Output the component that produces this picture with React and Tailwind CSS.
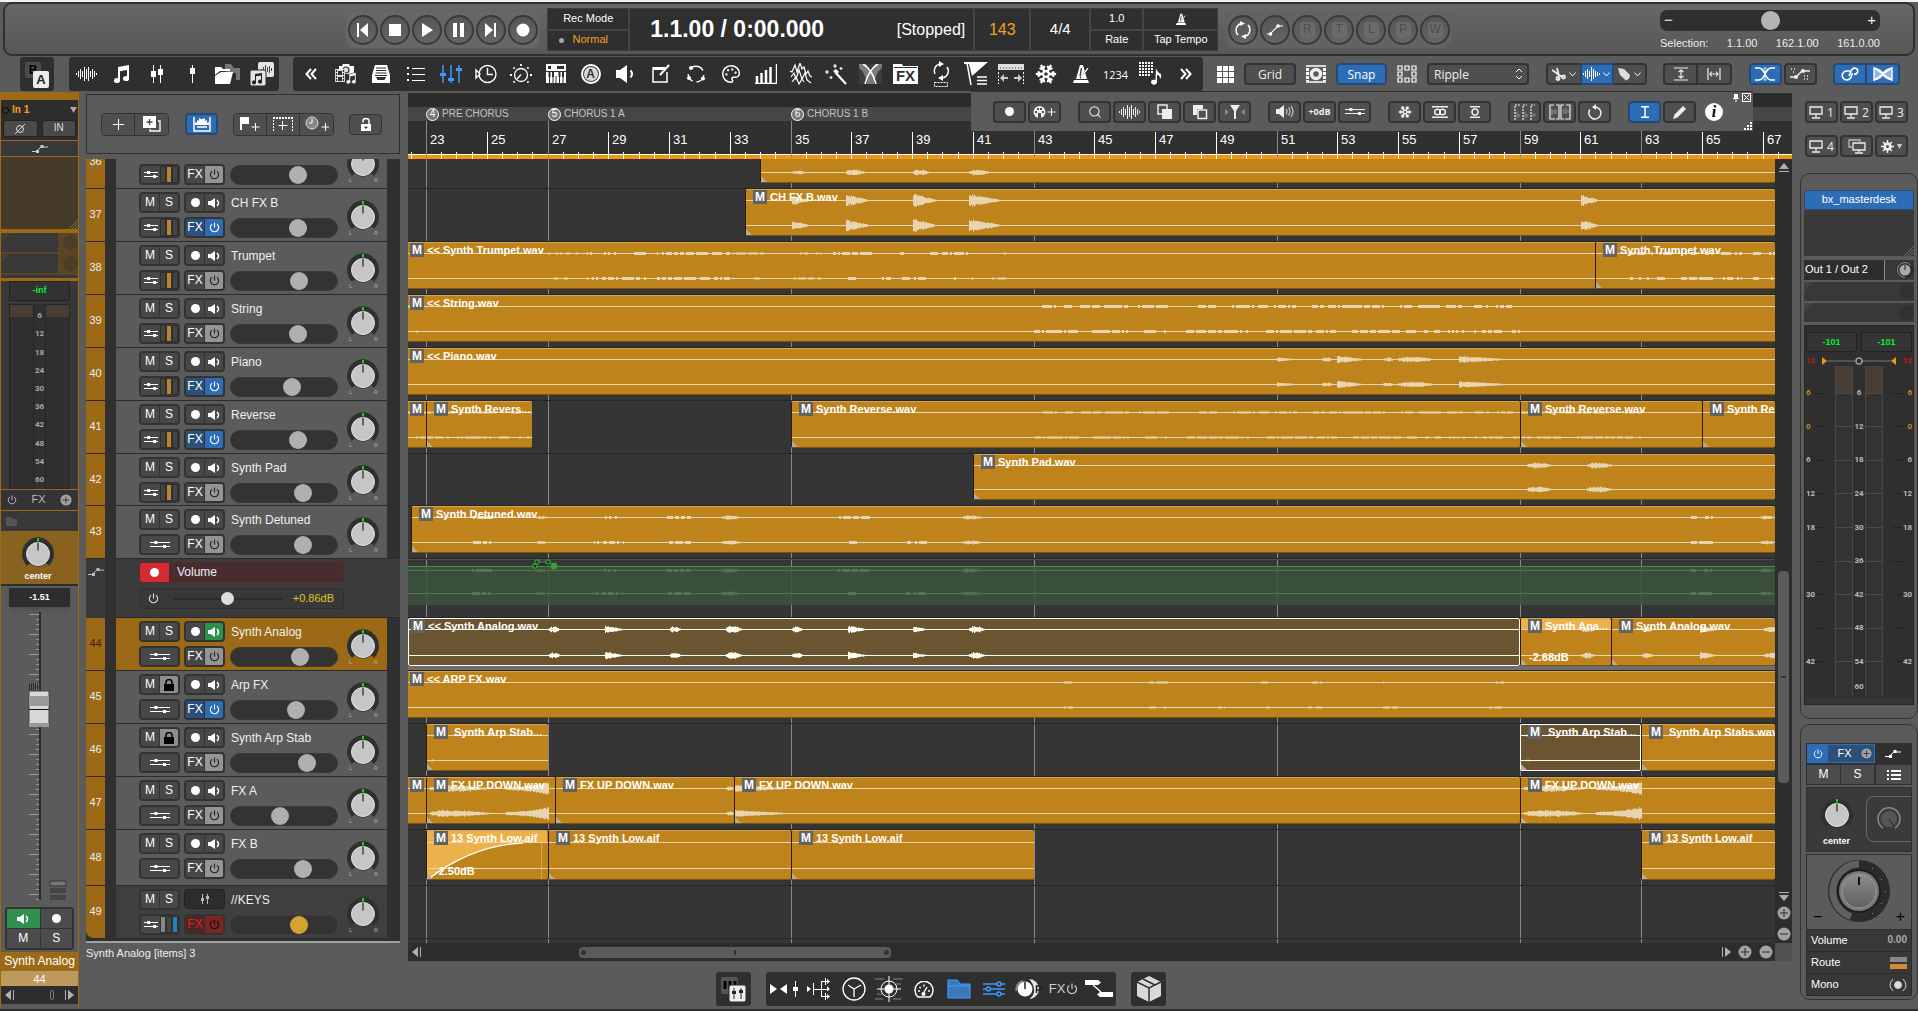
import React from "react";
import { Palette, Snowflake, Search } from "lucide-react";

/* ---------- icon helpers ---------- */
const S = ({ w = 24, h = 24, sw = 1.5, children, ...p }) => (
  <svg width={w} height={h} viewBox={`0 0 ${w} ${h}`} fill="none" stroke="currentColor" strokeWidth={sw} aria-hidden="true" {...p}>
    {children}
  </svg>
);
const F = { fill: "currentColor", stroke: "none" };

const barsPath = (xs, mid) => xs.map(([x, a]) => `M${x} ${mid - a}V${mid + a}`).join("");
const WAVE = [[1, 1], [3, 3], [5, 5], [7, 3], [9, 7], [11, 5], [13, 7], [15, 3], [17, 5], [19, 3], [21, 1]];

const Wave = () => <S w={22} h={16} sw={1}><path d={barsPath(WAVE.map(([x, a]) => [x - 0.5, a]), 8)} /></S>;
const Notes = () => (
  <S w={16} h={18}><path {...F} d="M4 2l11-2v13.5a3 2.5 0 1 1-2-2.3V5L6 6.3v9.2a3 2.5 0 1 1-2-2.3z" /></S>
);
const Faders2 = () => (
  <S w={14} h={18} sw={1}><path d="M3.5 0v18M10.5 0v18" /><path {...F} d="M1 6h5v6H1zM8 4h5v6H8z" /></S>
);
const Fader1 = () => <S w={6} h={18} sw={1}><path d="M3.5 0v18" /><path {...F} d="M1 3h5v6H1z" /></S>;
const Folders = () => (
  <S w={26} h={20}>
    <path fill="#777" stroke="none" d="M11 0h6l3 4h6v12h-4V9h-6l-5-2z" />
    <path {...F} d="M1 3h6l2 2h7v2H6l-5 4zM1 12l6-4h12L16 20H1z" />
  </S>
);
const PagesWave = () => (
  <S w={26} h={26} sw={1}>
    <rect x="9" y="1" width="16" height="15" rx="2" fill="#e4e4e4" stroke="none" />
    <path stroke="#444" d="M12.5 8v1M14.5 6v5M16.5 4v9M18.5 6v5M20.5 5v7M22.5 7v3" />
    <rect x="1" y="9" width="16" height="16" rx="2" fill="#e4e4e4" stroke="#2f2f2f" />
    <path fill="#222" stroke="none" d="M6 13l7-1v8.500a2 2 0 1 1-1-1.600v-4.400l-5 .8v6a2 2 0 1 1-1-1.600z" />
  </S>
);
const DblLeft = () => <S w={12} h={12} sw={2}><path d="M6 1L1.500 6 6 11M11 1L6.500 6 11 11" /></S>;
const DblRight = () => <S w={12} h={12} sw={2}><path d="M1 1l4.500 5L1 11M6 1l4.500 5L6 11" /></S>;
const Media = () => (
  <S w={24} h={20} sw={1.2}>
    <path {...F} d="M5 2h3l1-2h6l1 2h4v8H5z" /><circle cx="12" cy="6" r="3" stroke="#2f2f2f" fill="#ddd" />
    <rect x="1" y="5" width="10" height="13" fill="#ddd" stroke="none" />
    <path stroke="#2f2f2f" strokeDasharray="2 1" d="M2.500 6v12M9.500 6v12" /><path fill="#2f2f2f" stroke="none" d="M4 7h4v4H4zM4 13h4v4H4z" />
    <path {...F} stroke="#2f2f2f" strokeWidth=".6" d="M15 10l7-1.500v9a2.200 2 0 1 1-1.500-1.700v-4l-4 .8v5a2.200 2 0 1 1-1.500-1.600z" />
  </S>
);
const Tray = () => (
  <S w={18} h={18} sw={1.2}>
    <path {...F} d="M3 0h12l3 10v8H0V10z" /><path stroke="#2f2f2f" d="M4 3h10M4 5.500h10M3.500 8h11M3 10.500h12" />
    <path fill="#2f2f2f" stroke="none" d="M4 12h10l-1.500 3h-7z" />
  </S>
);
const Bullets = () => (
  <S w={18} h={16} sw={1}><path d="M5 2.500h13M5 8.500h13M5 14.500h13" /><path {...F} d="M0 1h2v2H0zM0 7h2v2H0zM0 13h2v2H0z" /></S>
);
const BlueFaders = () => (
  <S w={22} h={18} stroke="#3d9bff"><path d="M3 0v18M11 0v18M19 0v18" /><path fill="#3d9bff" stroke="none" d="M0 8h6v3H0zM8 13h6v3H8zM16 3h6v3h-6z" /></S>
);
const ClockArrow = () => (
  <S w={22} h={20} sw={1.4}><circle cx="12.500" cy="10" r="8.500" /><path d="M12.500 4v6.500H18" /><path fill="#2f2f2f" d="M1 6l4 4-4 4z" /></S>
);
const Dial = () => (
  <S w={22} h={22} sw={1.3}>
    <circle cx="11" cy="12" r="6.500" /><path d="M7 16l4-4.500" />
    <path strokeWidth="1.800" d="M11 1v2M3.500 4.500l1.200 1.200M18.500 4.500l-1.200 1.200M0 12h2M20 12h2M3.500 19.500l1.200-1.200M18.500 19.500l-1.200-1.200" />
  </S>
);
const Keyboard = () => (
  <S w={20} h={20}>
    <path {...F} d="M0 0h20v7H0zM0 8h20v11H0z" /><path fill="#2f2f2f" stroke="none" d="M11 2h7v3h-7zM2 2h3v3H2z" />
    <path stroke="#2f2f2f" strokeWidth="1" d="M3.500 12v8M7 12v8M10 12v8M13.500 12v8M17 12v8" />
    <path stroke="#2f2f2f" strokeWidth="2" d="M3.500 8v5M7 8v5M13.500 8v5M17 8v5" />
  </S>
);
const ACircle = () => (
  <span className="flex h-[20px] w-[20px] items-center justify-center rounded-full border-2 border-white bg-[#444]">
    <span className="flex h-[14px] w-[14px] items-center justify-center rounded-full bg-[#d8d8d8] text-[12px] leading-none font-bold text-[#333]">A</span>
  </span>
);
const Speaker = () => (
  <S w={20} h={18}><path {...F} d="M0 5h4l7-5v18l-7-5H0z" /><path strokeWidth="2" d="M14.500 5.500q3 3.500 0 7" /></S>
);
const EditSq = () => (
  <S w={20} h={20}><path d="M14 4H2v14h14V8" /><path strokeWidth="3" d="M2 4.500h12" /><path strokeWidth="2" d="M9 11l9-10" /></S>
);
const Cycle3 = () => (
  <S w={20} h={20} sw={1.500}>
    <path d="M6 3.200A8 8 0 0 1 17 6.500M17.800 11A8 8 0 0 1 10.500 18M6.500 17A8 8 0 0 1 2.200 10" />
    <circle {...F} cx="5" cy="4" r="2" /><circle {...F} cx="17" cy="14.500" r="2" /><circle {...F} cx="3" cy="14" r="2" />
  </S>
);
const Bars = () => (
  <S w={22} h={20} sw={2.500}><path d="M2 19V12M6.500 19V9M11 19V6M15.500 19V3" /><path strokeWidth="1.200" d="M0 19.400h21.400V0" /></S>
);
const Chaos = () => (
  <S w={22} h={22} sw={1.200}>
    <path d="M0 8l2 1 3-7 2 7 3-9 2 6 2-2 2 7 2-3 2 5 2 1" /><path d="M1 14l3-4 2 6 3-9 3 9 3-6 2 7 4 3" /><path d="M2 19l4-5 3 7 3-5 2 3" />
  </S>
);
const MagicWand = () => (
  <S w={24} h={22} sw={2.200}><path d="M11 9l11 12" /><path strokeWidth="1.200" d="M11 1v4M9 3h4M3 7v4M1 9h4M17 4v3M15.500 5.500h3M7 13v3M5.500 14.500h3" /><path {...F} d="M9 8l3-2 3 3-2 2z" /></S>
);
const Xfade = () => (
  <S w={23} h={20} sw={1.500}><path fill="#7b7b7b" stroke="none" d="M0 0h23v20H0z" /><path fill="#3c3c3c" stroke="none" d="M7 0h9l-4.500 7zM0 4q6 4 8 16H0zM23 4q-6 4-8 16h8z" /><path d="M4 0Q13 5 17 20M19 0Q10 5 6 20" /></S>
);
const FxFolder = () => (
  <span className="relative flex h-[20px] w-[25px] items-end">
    <svg className="absolute inset-0" width="25" height="20"><path fill="#fff" d="M0 0h9l1 2h15v18H0z" /><path fill="#2f2f2f" d="M1 3h23v1H1z" /></svg>
    <span className="relative w-full text-center text-[15px] leading-[16px] font-bold text-[#2f2f2f]">FX</span>
  </span>
);
const LoopDots = () => (
  <S w={20} h={26}>
    <path d="M4 13A7 7 0 0 1 9 3M16 6a7 7 0 0 1-5 11" /><path {...F} d="M8 0l5 3-5 3zM12 14l-5 3 5 3z" />
    <path strokeWidth="1" strokeDasharray="2 1" d="M3.500 21.500h13v4h-13z" />
  </S>
);
const FlagList = () => (
  <S w={24} h={24}><path d="M3 1l4 22" /><path {...F} d="M0 0h24L8 14 5 2H0z" /><path d="M13 15h10M13 18.500h10M13 22h10" /></S>
);
const RulerArr = () => (
  <S w={26} h={20}>
    <path fill="#ddd" stroke="none" d="M0 0h26v6H0z" /><path stroke="#333" strokeWidth="1" strokeDasharray="1 2" d="M2 4h22" strokeLinecap="butt" />
    <path strokeDasharray="2 1.500" strokeWidth="1" d="M.5 8v12M25.500 8v12" /><path stroke="#ccc" strokeWidth="2" d="M4 14h6M16 14h6" /><path fill="#ccc" stroke="none" d="M2 14l4-4v8zM24 14l-4-4v8z" />
  </S>
);
const Metronome = ({ w = 16 }) => (
  <svg width={w} height={w * 1.2} viewBox="0 0 16 19" fill="none" stroke="currentColor" strokeWidth="1.300"><path fill="currentColor" stroke="none" d="M0 19l1-3h14l1 3zM7 1h3l4 14H3z" /><path stroke="#2f2f2f" d="M8.500 4L7 12M7 14l8-10" /><path d="M8 13l7-9" /></svg>
);
const GridNote = () => (
  <S w={24} h={24}>
    <path strokeWidth="2" strokeDasharray="2 1" d="M0 1h15M0 4h15M0 7h15M0 10h15M0 13h12" />
    <path {...F} d="M17 6q1 4 5 6 1 3-1 5 0-4-3-4v7a3 2.500 0 1 1-1.500-2z" />
  </S>
);
const AB = () => (
  <span className="relative block h-[28px] w-[24px]">
    <span className="absolute left-0 top-[2px] flex h-[16px] w-[16px] items-start justify-center rounded-[2px] bg-[#4c4c4c] text-[12px] leading-[16px] font-bold text-black">B</span>
    <span className="absolute right-0 bottom-0 flex h-[17px] w-[16px] items-center justify-center rounded-[2px] bg-[#ececec] text-[13px] leading-none font-bold text-[#222]">A</span>
  </span>
);
const Power = ({ s = 12 }) => (
  <svg width={s} height={s} viewBox="0 0 12 12" fill="none" stroke="currentColor" strokeWidth="1.200"><path d="M6 .5V6M3.300 2.500a4.500 4.500 0 1 0 5.400 0" /></svg>
);
const SmallSpk = () => (
  <S w={12} h={10}><path {...F} d="M0 3h2.500L7 0v10L2.500 7H0z" /><path strokeWidth="1.500" d="M9 2q3 3 0 6" /></S>
);
const Routing = ({ w = 14 }) => (
  <svg width={w} height="9" viewBox={`0 0 ${w} 9`} stroke="currentColor" fill="currentColor" strokeWidth="1"><path d={`M0 2.500h${w}M0 6.500h${w}`} /><path stroke="none" d={`M${w * 0.22} 1h3v3h-3zM${w * 0.65} 5h3v3h-3z`} /></svg>
);
const Env = () => (
  <S w={16} h={8} sw={1}><path d="M0 6.500h4L9 2h7" /><path {...F} d="M4 5h3v3H4zM8.500 0h3v3h-3z" /></S>
);
const Lock = () => <S w={10} h={12}><path {...F} d="M0 5h10v7H0z" /><path d="M2 6V3.500a3 3 0 0 1 6 0V6" /></S>;
const Unlock = () => <S w={10} h={13}><path {...F} d="M0 6h10v7H0z" /><path d="M2 4.500V3a3 2.500 0 0 1 6 0v4" /><path stroke="#444" strokeWidth="1" d="M5 8v3M3.500 9.500h3" /></S>;
const Monitor = () => <S w={15} h={13} sw={1.300}><path d="M1 1h12v7H1zM7 8v3M3 12h8" /></S>;
const CopyFront = () => <S w={16} h={16} sw={1.500}><path d="M1 1h9v9H1z" /><path {...F} d="M5 5h10v10H5z" /></S>;
const CopyBack = () => <S w={16} h={16} sw={1.500}><path {...F} d="M1 1h10v4H5v6H1z" /><path d="M6 6h8.500v8.500H6z" /></S>;
const Bowties = () => (
  <S w={28} h={16} sw={1}><path {...F} d="M0 3l7 5-7 5zM17 3l-7 5 7 5z" /><path d="M25.500 0v16" /><path {...F} d="M23 6h5v4h-5z" /></S>
);
const Tree = () => (
  <S w={24} h={22} sw={1}><path {...F} d="M0 8l4 3-4 3zM20 1l3 2.500-3 2.500zM20 8l3 3-3 2.500zM20 16l3 2.500-3 2.500z" /><path d="M6.500 5v12M6 11.500h14M14 3.500h6M14 18.500h6M14.500 3v16M18.500 0v7M18.500 15v7" /></S>
);
const Clock = () => <S w={24} h={24} sw={1.300}><circle cx="12" cy="12" r="11" /><path d="M6 8l6 4 7-4M12 12v8" /></S>;
const Target = () => (
  <S w={28} h={26} sw={1}><circle cx="14" cy="13" r="8" /><circle {...F} cx="14" cy="13" r="4.500" /><path d="M14 0v26M2 13h24" /><path stroke="#888" d="M0 3h9M18 3h10M0 23h8M18 23h8M2 18h5M21 8h5" /></S>
);
const Gauge = () => (
  <S w={20} h={17} sw={1.400}><path d="M4 16A9 9 0 1 1 16 16zM9 13l4-7" /><circle {...F} cx="9.500" cy="13" r="2" /><path d="M4 10h2M5.500 6l1.200 1.200M10 3.500v2M14 10h2" /></S>
);
const BlueFolder = () => <S w={24} h={20} sw={1.200} stroke="#3d9bff"><path fill="#3c78b8" d="M1 19V1h9l3 4h10v14zM1 7h22" /></S>;
const BlueSliders = () => (
  <S w={22} h={16} stroke="#3d9bff"><path d="M0 3h14M18 3h4M0 8h3M8 8h14M0 13h14M18 13h4" /><circle cx="16" cy="3" r="2" /><circle cx="5.500" cy="8" r="2" /><circle cx="16" cy="13" r="2" /></S>
);
const KnobP = () => (
  <S w={28} h={20}>
    <path fill="#e6e6e6" stroke="none" d="M14 0a10 10 0 1 1 0 20q6-4 5-10t-5-10z" /><circle {...F} cx="10" cy="10" r="7.500" /><path stroke="#222" d="M10 3v7" />
    <path stroke="#888" strokeWidth="2" d="M1.500 12A8.500 8.500 0 0 1 8 2" /><path stroke="#222" d="M21.500 14V7h3a1.500 2 0 0 1 0 4h-3" />
  </S>
);
const Cable = () => <S w={28} h={20} sw={1.300}><path {...F} d="M0 1h13l3 2.500L13 6H0zM28 13H15l-3 2.500 3 2.500h13z" /><path d="M8 6l8 7" /></S>;
const Cube = () => (
  <S w={26} h={28} sw={1}><path fill="#d9d9d9" stroke="none" d="M13 1l12 6v14l-12 6-12-6V7z" /><path stroke="#2f2f2f" strokeWidth="1.500" d="M1 7l12 6 12-6M13 13v14M7 4l12 6" /></S>
);
const MixPages = () => (
  <span className="relative block h-[25px] w-[25px]">
    <svg width="25" height="25" fill="none">
      <rect width="17" height="17" rx="2" fill="#555" /><path stroke="#000" strokeWidth="3" d="M4 4v8M9 4v8M14 4v8" />
      <rect x="8" y="8" width="17" height="17" rx="2" fill="#eee" stroke="#2f2f2f" /><path stroke="#222" d="M13 11v11M20 11v11" /><path fill="#222" d="M11 14h4v3h-4zM18 13h4v3h-4z" />
    </svg>
  </span>
);
const Tri = ({ dir = "left" }) => (
  <svg width="10" height="10" fill="#b0b0b0" className={dir === "right" ? "rotate-180" : dir === "up" ? "rotate-90" : dir === "down" ? "-rotate-90" : ""}><path d="M0 5l6-5v10zM8 0h1v10H8z" /></svg>
);
const PlusC = ({ minus, s = 14 }) => (
  <svg width={s} height={s} viewBox="0 0 14 14"><circle cx="7" cy="7" r="6.500" fill="#a2a2a2" /><path stroke="#2b2b2b" d={minus ? "M3 7h8" : "M3 7h8M7 3v8"} /></svg>
);

/* ---------- generic controls ---------- */
const IconBtn = ({ label, children, className = "" }) => (
  <button aria-label={label} className={"flex items-center justify-center " + className}>{children}</button>
);
const toolCell = "h-[34px] w-[35px] text-white";
const boxBtn = "h-[22px] w-[33px] rounded-[4px] border-2 border-[#333] bg-[#4f4f4f] text-[#eee]";
const boxBtnOn = "h-[22px] w-[33px] rounded-[4px] border-2 border-[#274a74] bg-[#2d6db5] text-white";

function Knob({ lr }) {
  return (
    <svg width="34" height="38" viewBox="0 0 34 38" role="img" aria-label="Pan knob">
      <path fill="#303030" d="M17 0a17 17 0 0 1 11 29l-4-4H10l-4 4A17 17 0 0 1 17 0z" />
      <circle cx="17" cy="17" r="12.500" fill="#222" /><circle cx="17" cy="17" r="11.500" fill="#c6c6c6" stroke="#e2e2e2" />
      <path stroke="#222" strokeWidth="1.200" d="M17 5.500v8" /><path stroke="#0be00b" strokeWidth="2" d="M17 1v3.500" />
      {lr && <g fill="#aaa" fontSize="6" fontFamily="Roboto"><text x="3" y="35">L</text><text x="28" y="35">R</text></g>}
    </svg>
  );
}

/* ---------- transport ---------- */
const round = "h-[30px] w-[30px] rounded-full border-2 border-[#3a3a3a] bg-gradient-to-b from-[#565656] to-[#656565]";
function Transport() {
  const play = [
    ["Rewind to start", <path d="M0 0h2v14H0zM11 0v14L3 7z" />],
    ["Stop", <path d="M0 1h12v12H0z" />],
    ["Play", <path d="M1 0l11 7-11 7z" />],
    ["Pause", <path d="M0 0h4v14H0zM7 0h4v14H7z" />],
    ["Go to end", <path d="M9 0h2v14H9zM0 0v14l8-7z" />],
    ["Record", <circle cx="6" cy="7" r="6.500" />],
  ];
  const base = "flex items-center bg-[#2f2f2f]";
  const cell = base + " justify-center";
  return (
    <header className="mx-[3px] flex h-[54px] items-center rounded-[9px] border-2 border-[#303030] bg-gradient-to-b from-[#676767] to-[#585858] pt-[1px]">
      <div className="flex-[340_1_0px]" />
      <div className="flex h-[36px] items-center gap-[2px] rounded-[8px] bg-[#666] px-[2px]">
        {play.map(([l, d]) => (
          <IconBtn key={l} label={l} className={round}><svg width="13" height="14" fill="#fff" className="overflow-visible">{d}</svg></IconBtn>
        ))}
      </div>
      <div className="ml-[7px] flex h-[43px] gap-[2px] border border-[#3c3c3c] bg-[#454545] text-[11px] text-white">
        <div className="flex w-[80px] flex-col gap-[2px]">
          <div className={cell + " flex-1"}>Rec Mode</div>
          <div className={cell + " flex-1 gap-[9px] pr-[10px] text-[#f5a01e]"}><i className="h-[5px] w-[5px] rounded-full bg-[#aaa]" />Normal</div>
        </div>
        <div className={base + " w-[343px] justify-between pr-[8px] pl-[20px]"}>
          <span className="text-[23px] font-bold">1.1.00 / 0:00.000</span><span className="text-[16px]">[Stopped]</span>
        </div>
        <div className={cell + " w-[54px] text-[16px] text-[#f5a01e]"}>143</div>
        <div className={cell + " w-[58px] text-[15px]"}>4/4</div>
        <div className="flex w-[51px] flex-col gap-[2px]"><div className={cell + " flex-1"}>1.0</div><div className={cell + " flex-1"}>Rate</div></div>
        <div className="flex w-[73px] flex-col gap-[2px]">
          <div className={cell + " flex-1"}><Metronome w={10} /></div>
          <button className={cell + " flex-1"}>Tap Tempo</button>
        </div>
      </div>
      <div className="ml-[8px] flex h-[36px] items-center gap-[2px] rounded-[8px] bg-[#626262] px-[2px] text-white">
        <IconBtn label="Repeat" className={round}>
          <S w={18} h={18} sw={1.400}><path d="M4 14A7 7 0 0 1 7 2.500M14 4a7 7 0 0 1-3 11.500" /><path {...F} d="M6 0l5 2.500L6 5zM12 13l-5 2.500 5 2.500z" /></S>
        </IconBtn>
        <IconBtn label="Envelope" className={round}><S w={16} h={12} sw={1.200}><path d="M0 10h3l8-8h5" /><circle {...F} cx="3.500" cy="10" r="1.800" /><circle {...F} cx="11" cy="2" r="1.800" /></S></IconBtn>
        {["R", "T", "L", "P", "W"].map((l) => (
          <button key={l} className={round + " flex items-center justify-center"}><span className="flex h-[16px] w-[15px] items-center justify-center rounded-[4px] bg-[#6a6a6a] text-[12px] text-[#4c4c4c]">{l}</span></button>
        ))}
      </div>
      <div className="flex-[207_1_0px]" />
      <div className="w-[220px] text-[11px] text-[#eee]">
        <div className="flex h-[21px] items-center rounded-[7px] bg-[#2f2f2f] px-[4px] text-[15px]">
          <span>−</span>
          <input type="range" aria-label="Play rate" defaultValue="50" className="h-[20px] min-w-0 flex-1 appearance-none bg-transparent [&::-webkit-slider-thumb]:h-[19px] [&::-webkit-slider-thumb]:w-[19px] [&::-webkit-slider-thumb]:appearance-none [&::-webkit-slider-thumb]:rounded-full [&::-webkit-slider-thumb]:bg-[#b4b4b4]" />
          <span>+</span>
        </div>
        <div className="mt-[5px] flex justify-between leading-[14px]"><span>Selection:</span><span>1.1.00</span><span>162.1.00</span><span>161.0.00</span></div>
      </div>
      <div className="w-[33px]" />
    </header>
  );
}

/* ---------- main toolbar ---------- */
function MainToolbar() {
  const g1 = [["Media items", <Wave />], ["Notes", <Notes />], ["Mixer", <Faders2 />], ["Fader", <Fader1 />], ["Projects", <Folders />], ["Views", <PagesWave />]];
  const g2 = [
    ["Previous", <DblLeft />], ["Media explorer", <Media />], ["Tray", <Tray />], ["List", <Bullets />], ["Mixer view", <BlueFaders />], ["History", <ClockArrow />],
    ["Dial", <Dial />], ["Keyboard", <Keyboard />], ["Automation", <ACircle />], ["Monitor", <Speaker />], ["Edit", <EditSq />], ["Cycle", <Cycle3 />],
    ["Colors", <Palette size={20} strokeWidth={1.800} />], ["Levels", <Bars />], ["Noise", <Chaos />], ["Wand", <MagicWand />], ["Crossfade", <Xfade />],
    ["FX folder", <FxFolder />], ["Loop", <LoopDots />], ["Markers", <FlagList />], ["Ruler", <RulerArr />], ["Freeze", <Snowflake size={22} strokeWidth={2.500} />],
    ["Metronome", <Metronome />], ["Count in", <span className="font-['Open_Sans'] text-[11px] leading-none">1234</span>], ["Grid note", <GridNote />], ["Next", <DblRight />],
  ];
  const b = "flex h-[22px] items-center justify-center border-2 border-[#333] bg-[#4f4f4f] text-[#eee]";
  const on = "flex h-[22px] items-center justify-center border-2 border-[#274a74] bg-[#2d6db5] text-white";
  const caret = <S w={7} h={5} sw={1}><path d="M.5.5l3 3.500 3-3.500" /></S>;
  return (
    <div className="mt-[1px] flex h-[34px] items-center pr-[18px] pl-[20px] text-white">
      <IconBtn label="Layout A/B" className="h-full w-[34px] rounded-[3px] bg-[#2f2f2f]"><AB /></IconBtn>
      <div className="ml-[15px] flex rounded-[3px] bg-[#2f2f2f]">{g1.map(([l, i]) => <IconBtn key={l} label={l} className={toolCell}>{i}</IconBtn>)}</div>
      <div className="ml-[14px] flex rounded-[3px] bg-[#2f2f2f]">{g2.map(([l, i]) => <IconBtn key={l} label={l} className={toolCell}>{i}</IconBtn>)}</div>
      <div className="flex flex-1 items-center justify-between pl-[14px] font-['Open_Sans'] text-[12px]">
        <div className="flex items-center gap-[10px]">
          <S w={17} h={17} sw={1}><path fill="currentColor" stroke="none" d="M0 0h5v5H0zM6 0h5v5H6zM12 0h5v5h-5zM0 6h5v5H0zM6 6h5v5H6zM12 6h5v5h-5zM0 12h5v5H0zM6 12h5v5H6zM12 12h5v5h-5z" /></S>
          <button className={b + " w-[52px] rounded-[4px]"}>Grid</button>
          <S w={20} h={18} sw={1.500}><path d="M0 1h20M0 17h20" /><path d="M1.500 3v13M18.500 3v13" strokeWidth="3" strokeDasharray="3 1" /><circle cx="10" cy="9" r="4.500" strokeWidth="3.500" stroke="#eee" /></S>
          <button className={on + " w-[51px] rounded-[4px]"}>Snap</button>
          <S w={20} h={18} sw={1.200}><path d="M1 1h4v4H1zM8 1h4v4H8zM15 1h4v4h-4zM1 7h4v4H1zM15 7h4v4h-4zM1 13h4v4H1zM8 13h4v4H8zM15 13h4v4h-4z" /></S>
          <div className="relative flex items-center">
            <select aria-label="Edit mode" className="h-[22px] w-[102px] appearance-none rounded-[4px] border-2 border-[#333] bg-[#4f4f4f] px-[5px] text-[12px] leading-[17px] text-[#eee]"><option>Ripple</option></select>
            <span className="pointer-events-none absolute right-[6px]"><S w={8} h={12} sw={1}><path d="M1 4l3-3 3 3M1 8l3 3 3-3" /></S></span>
          </div>
        </div>
        <div className="flex">
          <IconBtn label="Split" className={b + " w-[34px] gap-[3px] rounded-l-[4px] border-r-0"}><S w={14} h={13} sw={1.800}><path d="M0 2l10 7M5 0l2 8" /><circle cx="6" cy="10.500" r="1.500" /><circle cx="11.500" cy="9" r="1.500" /></S>{caret}</IconBtn>
          <IconBtn label="Item tools" className={on + " w-[34px] gap-[2px]"}><S w={18} h={14} sw={1}><path d={barsPath([[1, 1], [3, 3], [5, 5], [7, 3], [9, 7], [11, 5], [13, 3], [15, 2], [17, 1]].map(([x, a]) => [x - 0.5, a]), 7)} /></S>{caret}</IconBtn>
          <IconBtn label="Tag" className={b + " w-[33px] gap-[3px] rounded-r-[4px] border-l-0"}><S w={14} h={13}><path fill="#ddd" stroke="none" d="M1 0l6 1 6 6q0 4-4 5.500L3 7z" /></S>{caret}</IconBtn>
        </div>
        <div className="flex">
          <IconBtn label="Fit height" className={b + " w-[35px] rounded-l-[4px]"}><S w={14} h={14} sw={1.200}><path d="M0 1h14M0 13h14M7 3v8M4.500 5L7 3l2.500 2M4.500 9L7 11l2.500-2" /></S></IconBtn>
          <IconBtn label="Fit width" className={b + " w-[34px] rounded-r-[4px] border-l-0"}><S w={14} h={12} sw={1.200}><path d="M1 0v12M13 0v12M3 6h8M5 3.500L3 6l2 2.500M9 3.500L11 6 9 8.500" /></S></IconBtn>
        </div>
        <div className="flex gap-[2px]">
          <IconBtn label="Auto crossfade" className={boxBtnOn}><S w={20} h={14} sw={1.400}><path fill="#5f93cc" stroke="none" d="M6 1h8l-4 6zM6 13h8l-4-6z" /><path d="M0 1h4q3 0 6 6t6 6h4M0 13h4q3 0 6-6t6-6h4" /><path strokeWidth="1" strokeDasharray="2 1" d="M10 0v14" /></S></IconBtn>
          <IconBtn label="Move envelopes" className={boxBtn}><S w={20} h={14} sw={1.400}><path d="M0 10h6l6-6h8" /><circle {...F} cx="6" cy="10" r="2" /><circle {...F} cx="13" cy="4" r="2" /><path strokeDasharray="1 2" d="M1 2h5M3 5h3M14 9h4M14 12h6" /></S></IconBtn>
        </div>
        <div className="flex">
          <IconBtn label="Link" className={on + " w-[34px] rounded-l-[4px]"}><S w={18} h={15} sw={1.600}><path d="M9 4H6a4.500 4.500 0 1 0 3.500 7l2-5M8 9l2-5q1.500-3 4-3a3 3 0 0 1 2 5q-1 1.500-3 1.500" /></S></IconBtn>
          <IconBtn label="Group items" className={on + " w-[33px] rounded-r-[4px] border-l-0"}><S w={20} h={14} sw={1.400}><path fill="#8db4dd" d="M1 1v12L10 7zM19 1v12L10 7z" /><path d="M1 13q8-2 9-6t9-6M1 1q8 2 9 6t9 6" /></S></IconBtn>
        </div>
      </div>
    </div>
  );
}

/* ---------- left mixer strip ---------- */
function ChannelStrip() {
  const sm = "flex h-[17px] flex-1 items-center justify-center rounded-[3px] border border-[#222] bg-[#4a4a4a] text-[10px] text-[#ddd]";
  return (
    <aside className="mt-[1px] flex w-[79px] flex-col border-x border-[#9c6a16] bg-[#383838] text-white">
      <div className="h-[8px] bg-[#9c6a16]" />
      <div className="bg-[#2d2d2d]">
        <div className="flex h-[20px] items-center gap-[3px] px-[1px] text-[10px] font-bold text-[#f5a01e]">
          <i className="h-[7px] w-[7px] rounded-full border border-black bg-[#333]" />In 1
          <svg className="ml-auto" width="7" height="6" fill="#aaa"><path d="M0 0h7L3.500 6z" /></svg>
        </div>
        <div className="flex h-[20px] gap-[4px] px-[2px]">
          <button className={sm} aria-label="Phase"><S w={12} h={12} sw={1}><circle cx="6" cy="6" r="3.500" /><path d="M1 11L11 1" /></S></button>
          <button className={sm}>IN</button>
        </div>
      </div>
      <IconBtn label="Envelopes" className="h-[17px] border-y border-[#9c6a16] text-[#ccc]"><Env /></IconBtn>
      <div className="flex h-[72px] items-end justify-end bg-[#463b29]"><S w={9} h={9} sw={1} stroke="#8a6a35"><path d="M0 9l9-9M3 9l6-6M6 9l3-3" /></S></div>
      <div className="h-[4px] bg-[#9c6a16]" />
      {[0, 1].map((i) => (
        <div key={i} className="flex h-[21px] border-b-2 border-[#5a4626] bg-[#5a4626]">
          <div className="flex-1 bg-[#383838]"><S w={8} h={8} sw={1} stroke="#5a4a2c"><path d="M0 2l2-2M0 5l5-5M0 8l8-8" /></S></div>
          <div className="flex w-[20px] items-center justify-end"><i className="h-[15px] w-[15px] rounded-full bg-[#4b3d26]" /></div>
        </div>
      ))}
      <div className="mt-[3px] h-[3px] bg-[#9c6a16]" />
      <div className="mx-[8px] flex h-[20px] items-center justify-center border border-[#222] bg-[#323232] text-[9px] font-bold text-[#0aea3a]">-inf</div>
      <div className="mx-[8px] mt-[3px] flex h-[185px] bg-[#303030]">
        <div className="flex-1 border border-[#262626]"><div className="h-[12px] bg-[#4a3e34]" /></div>
        <div className="flex w-[11px] flex-col pt-[3px] text-center font-['Roboto'] text-[8px] leading-[10px] font-bold text-[#a8a8a8]">
          {[6, 12, 18, 24, 30, 36, 42, 48, 54, 60].map((n) => <span key={n} className="flex flex-1 items-center justify-center">{n}</span>)}
        </div>
        <div className="flex-1 border border-[#262626]"><div className="h-[12px] bg-[#4a3e34]" /></div>
      </div>
      <div className="flex h-[22px] items-center justify-between border-y border-[#9c6a16] bg-[#343434] px-[6px] text-[11px] text-[#bbb]">
        <button aria-label="Bypass FX"><Power s={10} /></button><button>FX</button><button aria-label="Add FX"><PlusC s={12} /></button>
      </div>
      <div className="flex h-[20px] items-center pl-[5px]"><svg width="11" height="9" fill="#555"><path d="M0 0h5l1 2h5v7H0z" /></svg></div>
      <div className="flex h-[53px] flex-col items-center bg-[#8a6220] pt-[6px] pr-[3px] text-[9px] leading-[10px] font-bold">
        <div className="h-[34px] overflow-hidden"><Knob /></div>center
      </div>
      <div className="flex flex-1 flex-col border-t-2 border-[#2d2d2d] bg-[#5b5b5b]">
        <div className="mx-[8px] mt-[2px] flex h-[19px] items-center justify-center bg-[#2d2d2d] text-[9px] font-bold shadow-md">-1.51</div>
        <div className="flex h-[294px] justify-center">
          <svg width="76" height="294" aria-hidden="true">
            <path stroke="#2b2b2b" strokeWidth="2" d="M38 5v288" />
            <path stroke="#999" d={Array.from({ length: 15 }, (_, i) => `M27 ${7.5 + i * 20}h9`).join("") + Array.from({ length: 58 }, (_, i) => `M34 ${7.5 + i * 5}h3`).join("")} />
            <path stroke="#2b2b2b" strokeDasharray="1 1" strokeWidth="7" d="M27 80h10" />
            <rect x="27" y="84" width="20" height="35" fill="#d8d8d8" stroke="#444" /><path fill="#999" d="M27 89h20v10H27zM27 116h20v4H27z" /><path stroke="#111" d="M27 102.500h20" />
            <path fill="#777" stroke="#333" d="M48 274h16v5H48z" /><path fill="#444" d="M48 281h16v5H48zM48 288h16v5H48z" />
          </svg>
        </div>
        <div className="mx-[4px] mt-[6px] grid grid-cols-2 overflow-hidden rounded-[3px] border-2 border-[#333] text-[12px]">
          <IconBtn label="Monitor" className="h-[19px] bg-[#2f8f4e]"><SmallSpk /></IconBtn>
          <IconBtn label="Record arm" className="border-l border-[#333] bg-[#4c4c4c]"><i className="h-[9px] w-[9px] rounded-full bg-white" /></IconBtn>
          <button className="h-[20px] border-t border-[#333] bg-[#4c4c4c]">M</button>
          <button className="border-t border-l border-[#333] bg-[#4c4c4c]">S</button>
        </div>
        <div className="mt-[2px] h-[19px] bg-[#9c6a16] text-center text-[12px] leading-[18px] whitespace-nowrap">Synth Analog</div>
        <div className="h-[15px] bg-[#bd9a5b] text-center text-[11px] leading-[16px]">44</div>
        <div className="flex h-[18px] items-center justify-between bg-[#2d2d2d] px-[4px]"><Tri /><i className="ml-[24px] h-[10px] w-[4px] rounded border border-[#777]" /><Tri dir="right" /></div>
        <div className="flex-1" />
      </div>
    </aside>
  );
}

/* ---------- track list ---------- */
const TRACKS = [
  { n: 36, name: "", h: 53, v: 66, fx: 0, mini: 1, cut: 1 },
  { n: 37, name: "CH FX B", h: 53, v: 66, fx: 1, mini: 1 },
  { n: 38, name: "Trumpet", h: 53, v: 67, fx: 0, mini: 1 },
  { n: 39, name: "String", h: 53, v: 66, fx: 0, mini: 1 },
  { n: 40, name: "Piano", h: 53, v: 59, fx: 1, mini: 1 },
  { n: 41, name: "Reverse", h: 53, v: 66, fx: 1, mini: 1 },
  { n: 42, name: "Synth Pad", h: 52, v: 72, fx: 0, mini: 1 },
  { n: 43, name: "Synth Detuned", h: 53, v: 72, fx: 0 },
  { n: 44, name: "Synth Analog", h: 53, v: 68, fx: 0, sel: 1 },
  { n: 45, name: "Arp FX", h: 53, v: 64, fx: 1, lock: 1 },
  { n: 46, name: "Synth Arp Stab", h: 53, v: 76, fx: 0, lock: 1 },
  { n: 47, name: "FX A", h: 53, v: 46, fx: 0 },
  { n: 48, name: "FX B", h: 56, v: 72, fx: 0 },
  { n: 49, name: "//KEYS", h: 53, v: 67, fx: 2, mini: 2, bus: 1 },
];
const pair = "flex h-[21px] w-[41px] overflow-hidden rounded-[4px] border-2 border-[#333] bg-[#484848] text-[12px] text-white";
const half = "flex flex-1 items-center justify-center";
function Track({ t }) {
  const fxL = ["", " bg-[#2c5078]", " bg-[#4a2626] text-[#f01818]"][t.fx];
  const fxR = [" bg-[#959595] text-[#222]", " bg-[#2d6db5]", " bg-[#7c2527] text-[#1d0a0a]"][t.fx];
  const row = t.sel ? " bg-[#9c6a16]" : t.bus ? " bg-[#3f3f3f]" : " bg-[#5b5b5b]";
  const thumb = t.bus ? " [&::-webkit-slider-thumb]:bg-[#d4a332]" : " [&::-webkit-slider-thumb]:bg-[#b0b0b0]";
  return (
    <div className="flex shrink-0 bg-[#303030]" style={{ height: t.h }}>
      <div className={"flex w-[19px] items-center justify-center border-b border-[#2b2b2b] bg-[#9c6a16] text-[11px] " + (t.sel ? "text-[#3b2500]" : "text-[#eee]") + (t.bus ? " rounded-bl-[8px]" : "")}>{t.n}</div>
      <div className={"ml-[11px] flex w-[271px] border-b border-[#2b2b2b] pt-[3px] pl-[23px]" + row}>
        <div className="flex flex-col gap-[4px]">
          <div className={"flex gap-[4px]" + (t.cut ? " invisible" : "")}>
            <div className={pair}>
              <button className={half} aria-label={"Mute " + t.name}>M</button>
              {t.lock ? <button aria-label="Locked" className={half + " border-l border-[#333] bg-[#8d8d8d] text-black"}><Lock /></button> : <button className={half + " border-l border-[#333]"} aria-label={"Solo " + t.name}>S</button>}
            </div>
            {t.bus ? (
              <button aria-label="Folder mixer" className="flex h-[20px] w-[41px] items-center justify-center rounded-[4px] border border-[#222] bg-[#2d2d2d] text-[#bbb]"><S w={10} h={10} sw={1}><path d="M2.500 0v10M7.500 0v10" /><path {...F} d="M1 4h3v3H1zM6 2h3v3H6z" /></S></button>
            ) : (
              <div className={pair}>
                <IconBtn label="Record arm" className="flex-1"><i className="h-[9px] w-[9px] rounded-full bg-white" /></IconBtn>
                <IconBtn label="Monitor" className={"flex-1 border-l border-[#333]" + (t.sel ? " bg-[#2f8f4e]" : "")}><SmallSpk /></IconBtn>
              </div>
            )}
          </div>
          <div className="flex gap-[4px]">
            <div className={pair}>
              <IconBtn label="Routing" className="flex-1"><Routing w={t.mini ? 14 : 20} /></IconBtn>
              {t.mini && (
                <span className="flex w-[18px] justify-between bg-[#303030] px-[1px] py-[1px]">
                  <i className={"w-[4px] " + (t.mini === 2 ? "bg-[#888]" : "bg-[#444]")} /><i className={"w-[4px] " + (t.mini === 2 ? "bg-[#444]" : "bg-[#bd8133]")} /><i className={"w-[4px] " + (t.mini === 2 ? "bg-[#2280bb]" : "bg-[#444]")} />
                </span>
              )}
            </div>
            <div className={pair}>
              <button className={half + fxL}>FX</button>
              <button aria-label="Bypass FX" className={half + " border-l border-[#333]" + fxR}><Power s={11} /></button>
            </div>
          </div>
        </div>
        <div className="ml-[5px] flex w-[108px] flex-col">
          <span className="h-[26px] pl-[1px] text-[12px] leading-[22px] whitespace-nowrap text-[#f0f0f0]">{t.name}</span>
          <input type="range" aria-label={"Volume of track " + t.n} defaultValue={t.v} className={"h-[20px] w-[108px] appearance-none rounded-full border border-[#3a3a3a] bg-[#333] [&::-webkit-slider-thumb]:h-[18px] [&::-webkit-slider-thumb]:w-[18px] [&::-webkit-slider-thumb]:appearance-none [&::-webkit-slider-thumb]:rounded-full" + thumb} />
        </div>
        <div className="mt-[8px] ml-[8px]"><Knob lr /></div>
      </div>
    </div>
  );
}
function EnvelopeRow() {
  return (
    <div className="flex h-[59px] shrink-0 bg-[#303030]">
      <div className="flex w-[19px] justify-center bg-[#3a3a3a] pt-[9px] text-[#bbb]"><Env /></div>
      <div className="ml-[11px] flex flex-1 flex-col gap-[5px] border-b border-[#2b2b2b] bg-[#3b3b3b] pt-[3px] pl-[23px]">
        <div className="flex h-[21px] w-[205px] overflow-hidden rounded-[4px] border border-[#5a2a2a] bg-[#472d2f] text-[12px] text-[#eee]">
          <button aria-label="Arm envelope" className="flex w-[29px] items-center justify-center bg-[#d42c30]"><i className="h-[9px] w-[9px] rounded-full bg-white" /></button>
          <span className="pl-[8px] leading-[19px]">Volume</span>
        </div>
        <div className="flex h-[21px] w-[205px] items-center rounded-[4px] border border-[#303030] bg-[#383838] pr-[9px] pl-[8px] text-[11px] text-[#e4c030]">
          <button aria-label="Bypass envelope" className="mr-[15px] text-[#ddd]"><Power s={11} /></button>
          <span className="relative flex flex-1 items-center">
            <i className="absolute h-[2px] w-full bg-[#2b2b2b]" />
            <input type="range" aria-label="Envelope volume" defaultValue="50" className="relative h-[14px] w-full appearance-none bg-transparent [&::-webkit-slider-thumb]:h-[13px] [&::-webkit-slider-thumb]:w-[13px] [&::-webkit-slider-thumb]:appearance-none [&::-webkit-slider-thumb]:rounded-full [&::-webkit-slider-thumb]:bg-[#ddd]" />
          </span>
          <span className="ml-[11px]">+0.86dB</span>
        </div>
      </div>
    </div>
  );
}
function TrackPanel() {
  const b = "flex h-[21px] w-[33px] items-center justify-center border-[#333] bg-[#4f4f4f] text-white";
  return (
    <section className="flex w-[314px] flex-col">
      <div className="mt-[3px] flex h-[60px] items-center border border-[#303030] pl-[14px]">
        <div className="flex overflow-hidden rounded-[4px] border border-[#333]">
          <IconBtn label="Add track" className={b + " border-r"}><S w={11} h={11} sw={1}><path d="M5.500 0v11M0 5.500h11" /></S></IconBtn>
          <IconBtn label="Duplicate track" className={b}><S w={18} h={16} sw={1.300}><path {...F} d="M0 0h13v12H0z" /><path stroke="#444" d="M6.500 3v6M3.500 6h6" /><path d="M15 5h2v10H7v-2" /></S></IconBtn>
        </div>
        <IconBtn label="Lanes" className="ml-[16px] h-[22px] w-[33px] rounded-[4px] border-2 border-[#274a74] bg-[#2d6db5] text-white"><S w={18} h={15} sw={1.500}><path d="M1 0v14h16V0M4 10h10" /><path {...F} d="M2 8V5l2 1V3l2 1V1l2 1h2l2-1v3l2-1v3l2-1v3z" /></S></IconBtn>
        <div className="ml-[15px] flex overflow-hidden rounded-[4px] border border-[#333]">
          <IconBtn label="Add marker" className={b + " border-r"}><S w={20} h={14} sw={1}><path {...F} d="M0 0h9v7H2v6H0z" /><path d="M15.500 6v8M11.500 10h8" /></S></IconBtn>
          <IconBtn label="Add region" className={b + " border-r"}><S w={20} h={14} sw={1}><path strokeWidth="2" strokeDasharray="2 1" d="M0 1h20" /><path strokeDasharray="2 1" d="M.5 3v11M19.500 3v11" /><path d="M9.500 4v9M5.500 8.500h9" /></S></IconBtn>
          <IconBtn label="Add tempo marker" className={b}><S w={24} h={16} sw={1}><circle cx="7" cy="7" r="6" fill="#888" stroke="#ddd" /><path d="M7 3v4H4M20.500 7v8M16.500 11h8" /></S></IconBtn>
        </div>
        <IconBtn label="Unlock" className="ml-[15px] h-[21px] w-[33px] rounded-[4px] border border-[#333] bg-[#4f4f4f] text-white"><Unlock /></IconBtn>
      </div>
      <div className="mt-[5px] flex h-[784px] flex-col overflow-hidden border-b-2 border-[#a0a0a0] bg-[#303030]">
        <div className="flex h-[30px] shrink-0 flex-col justify-end overflow-hidden"><Track t={TRACKS[0]} /></div>
        {TRACKS.slice(1, 8).map((t) => <Track key={t.n} t={t} />)}
        <EnvelopeRow />
        {TRACKS.slice(8).map((t) => <Track key={t.n} t={t} />)}
      </div>
      <p className="pt-[3px] text-[11px] leading-[14px] text-[#eee]">Synth Analog [items] 3</p>
    </section>
  );
}

/* ---------- arrange view ---------- */
const BAR = 30.375;
const barX = (b) => Math.round(18 + (b - 23) * BAR);
const noise = (i) => { const s = Math.sin(i * 12.9898) * 43758.5453; return s - Math.floor(s); };
function wavePath(segs, origin, yc, salt) {
  let d = "";
  segs.forEach(([from, to, amp, kind]) => {
    const a = barX(from), z = barX(to);
    for (let x = a; x < z; x++) {
      const t = (x - a) / (z - a);
      let r;
      if (kind === "dots") {
        if (noise(Math.floor(x / 8) + salt) < 0.2) continue;
        r = noise(Math.floor(x / 2) + salt) > 0.35 ? amp : 0.5;
      } else if (kind === "grow") r = amp * (0.25 + 0.75 * t * t) * (0.7 + 0.3 * noise(x + salt));
      else if (kind === "decay") r = amp * Math.pow(1 - t, 0.8) * (0.6 + 0.4 * noise(x + salt));
      else r = amp * Math.min(1, 0.5 + 3 * t, 2.2 * (1 - t)) * (0.55 + 0.45 * noise(x + salt));
      r = Math.max(r, 0.5);
      d += `M${x - origin} ${(yc - r).toFixed(1)}h1v${(2 * r).toFixed(1)}h-1z`;
    }
  });
  return d;
}
const analog = [[27, 27.4, 3, "b"], [28.85, 29.5, 4, "decay"], [31, 31.4, 3, "b"], [32.85, 33.4, 3.500, "b"], [35, 35.4, 3, "b"], [36.85, 37.5, 4, "decay"], [39, 39.5, 3, "decay"], [40.85, 41.4, 3.500, "b"]];
const detuned = [[24.5, 25.2, 1.5, "dots"], [26.6, 27, 1.500, "b"], [28.5, 29.5, 1.500, "dots"], [30.9, 31.7, 1.500, "dots"], [32.7, 33.4, 2, "b"], [36.5, 37.6, 1.500, "dots"], [38.8, 39.5, 1.500, "dots"], [40.6, 41.4, 2, "b"], [64.6, 65.5, 1.500, "dots"], [66.9, 67.4, 2, "b"]];
const trumpet = [[27, 28, 1, "dots"], [28.3, 30.3, 1.500, "dots"], [30.6, 33, 1.500, "dots"], [33.1, 34.2, 1, "dots"], [35.1, 36, 1, "dots"], [36.4, 38.3, 1.500, "dots"], [38.6, 41, 1.500, "dots"], [41.1, 42.2, 1, "dots"]];
const LANES = [
  { id: 36, h: 53, clips: [{ s: 34, bare: true, w: [[35, 35.5, 2, "b"], [36.800, 37.5, 3, "b"], [39, 39.6, 3, "b"], [40.85, 41.6, 3, "b"]] }] },
  { id: 37, h: 53, clips: [{ s: 33.5, label: "CH FX B.wav", w: [[35, 35.6, 5, "decay"], [36.8, 37.6, 6, "decay"], [39, 39.8, 7, "decay"], [40.85, 41.9, 7, "decay"], [61, 61.6, 6, "decay"]] }] },
  { id: 38, h: 53, clips: [{ e: 61.5, label: "<< Synth Trumpet.wav", w: trumpet }, { s: 61.5, label: "Synth Trumpet.wav", w: [[62.6, 64, 1.500, "dots"], [64.3, 66.3, 1.500, "dots"], [66.6, 68, 1.500, "dots"]] }] },
  { id: 39, h: 53, clips: [{ label: "<< String.wav", w: [[22.4, 22.8, 1, "dots"], [43, 59, 1.500, "dots"]] }] },
  { id: 40, h: 53, clips: [{ label: "<< Piano.wav", w: [[51, 51.7, 2.500, "decay"], [52.5, 52.9, 2, "b"], [53, 53.9, 4, "decay"], [54.5, 54.9, 2, "b"], [55, 56.3, 3, "b"], [57, 58.7, 3.500, "decay"]] }] },
  { id: 41, h: 53, clips: [{ e: 23, label: "", w: [[22, 23, 1, "dots"]] }, { s: 23, e: 26.5, label: "Synth Revers...", w: [[23, 26.5, 1, "dots"]] }, { s: 35, e: 59, label: "Synth Reverse.wav", w: [[43, 59, 1, "dots"]] }, { s: 59, e: 65, label: "Synth Reverse.wav", w: [[59, 63, 1, "dots"]] }, { s: 65, label: "Synth Re", w: [] }] },
  { id: 42, h: 52, clips: [{ s: 41, label: "Synth Pad.wav", w: [[59.2, 60.1, 3, "b"], [61.2, 62.1, 3, "b"]] }] },
  { id: 43, h: 53, clips: [{ s: 22.5, label: "Synth Detuned.wav", w: detuned }] },
  { id: "env", h: 59, env: true, clips: [] },
  { id: 44, h: 53, sel: true, clips: [{ e: 59, sel: true, label: "<< Synth Analog.wav", w: analog }, { s: 59, e: 62, light: true, db: "-2.68dB", label: "Synth Ana...", w: [[61, 61.5, 3, "b"]] }, { s: 62, label: "Synth Analog.wav", w: [[63, 63.4, 3, "b"], [64.9, 65.5, 4, "decay"], [67, 68, 3, "b"]] }] },
  { id: 45, h: 53, clips: [{ label: "<< ARP FX.wav", w: [[44, 44.3, 1, "dots"], [46.8, 47.5, 1, "dots"], [49, 49.3, 1, "dots"], [50.5, 50.8, 1, "dots"], [52, 52.5, 1, "dots"], [54.5, 55, 1, "dots"], [58, 58.5, 1, "dots"]] }] },
  { id: 46, h: 53, clips: [{ s: 23, e: 27, pad: true, label: "Synth Arp Stab...", w: [[23.1, 23.3, 1, "b"]] }, { s: 59, e: 63, sel: true, pad: true, label: "Synth Arp Stab...", w: [[59.1, 59.3, 1, "b"]] }, { s: 63, pad: true, label: "Synth Arp Stabs.wav", w: [] }] },
  { id: 47, h: 53, clips: [{ e: 23, label: "", w: [] }, { s: 23, e: 27.25, label: "FX UP DOWN.wav", w: [[23.1, 25.3, 3.500, "b"], [25.6, 27, 7, "grow"]] }, { s: 27.25, e: 33.15, label: "FX UP DOWN.wav", w: [[32.85, 33.15, 2, "b"]] }, { s: 33.15, e: 59, label: "FX UP DOWN.wav", w: [[33.15, 35, 3.500, "decay"]] }, { s: 59, e: 63.2, label: "FX UP DOWN.wav", w: [[59.1, 61.3, 3.500, "b"], [61.5, 63, 7, "grow"]] }, { s: 63.2, plain: true, w: [] }] },
  { id: 48, h: 56, clips: [{ s: 23, e: 27, fade: true, db: "-2.50dB", label: "13 Synth Low.aif", w: [] }, { s: 27, e: 35, label: "13 Synth Low.aif", w: [] }, { s: 35, e: 43, label: "13 Synth Low.aif", w: [] }, { s: 63, label: "13 Synth Low.aif", w: [] }] },
  { id: 49, h: 53, clips: [] },
];
function Clip({ c, h }) {
  const left = c.s ? barX(c.s) : 0;
  const y1 = h > 48 ? 12 : 11, y2 = h - y1;
  const box = c.e ? { left, width: barX(c.e) - left, height: h } : { left, right: 0, height: h };
  const ink = c.sel ? "#fffdf0" : "#e8d5b0";
  return (
    <div style={box} className={"absolute top-0 overflow-hidden " + (c.sel ? "rounded-[2px] border border-white bg-[#6b5430] " : "border-t border-b border-t-[#d9a450] border-b-[#7d540f] bg-[#be831b] ") + (c.s && !c.sel && !c.plain ? "rounded-[2px] border-l border-l-[#2b1d05]" : "")}>
      {c.light && <div className="absolute inset-x-0 top-0 h-[11px] bg-[#ecb14a]" />}
      <svg className="absolute inset-0 h-full w-full" aria-hidden="true">
        {c.fade && <path fill="#ecb14a" d={`M0 0H120V12H100Q50 12 0 ${h}z`} />}
        {c.fade && <path fill="none" stroke="#fff" strokeWidth="1.300" d={`M0 ${h - 1}Q45 14 96 12`} />}
        {c.fade && <rect x="114" y="12" width="1" height="100%" fill="#d9a450" />}
        <rect width="100%" height="1" y={y1 - 1} fill={ink} /><rect width="100%" height="1" y={y2 - 1} fill={ink} />
        <path fill={ink} d={wavePath(c.w, left, y1 - 0.5, 1) + wavePath(c.w, left, y2 - 0.5, 7)} />
        {c.s && !c.plain && <path fill="#b5aea0" d={`M0 ${h - 8}l6 6H0z`} />}
      </svg>
      {!c.plain && !c.bare && (
        <div className={"relative flex items-center gap-[3px] text-[11px] leading-[14px] font-bold whitespace-nowrap text-white " + (c.s ? "pl-[7px]" : "pl-[2px]")}>
          <span className="h-[14px] w-[14px] shrink-0 bg-[#626262] text-center text-[12px]">M</span>
          <span className={c.pad ? "pl-[3px]" : ""}>{c.label}</span>
        </div>
      )}
      {c.db && <span className="absolute bottom-[1px] left-[8px] text-[11px] leading-[14px] font-bold text-white">{c.db}</span>}
    </div>
  );
}
function EnvelopeLane() {
  return (
    <svg className="absolute inset-0 h-full w-full" aria-hidden="true">
      <rect width="100%" height="1" fill="#4e4e4e" />
      <rect y="8" width="100%" height="38" fill="#3a5439" fillOpacity=".85" />
      <rect y="7" width="100%" height="1" fill="#3ba03b" />
      <rect y="11" width="100%" height="1" fill="#56705a" /><rect y="34" width="100%" height="1" fill="#56705a" />
      <path fill="#56705a" d={wavePath(detuned, 0, 11.5, 1) + wavePath(detuned, 0, 34.5, 7)} />
      <g fill="#2c2c2c" stroke="#3ba03b" strokeWidth="1.200"><path d="M127 7l2-4h12l5 4" /><circle cx="127" cy="7" r="2.200" /><circle cx="129" cy="3" r="2.200" /><circle cx="140" cy="3" r="2.200" /><circle cx="146" cy="7" r="2.800" fill="#3ba03b" /></g>
    </svg>
  );
}
const MAJOR = [23, 27, 35, 43, 51, 59, 63];
function FloatBar() {
  const groups = [
    [["Record", <i className="h-[9px] w-[9px] rounded-full bg-white" />],
      ["Color", <S w={23} h={14} sw={1}><circle cx="6.500" cy="7" r="6" fill="#eee" stroke="none" /><path fill="#4f4f4f" stroke="none" d="M2 6h2v2H2zM4 3h2v2H4zM7 3h2v2H7zM9 6h2v2H9zM5 8h3v5H5z" /><path d="M18.500 3v8M14.500 7h8" /></S>]],
    [["Zoom", <Search size={14} strokeWidth={1.800} />], ["Waveform", <Wave />], ["Bring to front", <CopyFront />], ["Send to back", <CopyBack />],
      ["Filter", <S w={20} h={14} sw={1.500}><path {...F} d="M5 0h10l-4 6v8H9V6z" /><path fill="#888" stroke="none" d="M0 4l4 3-4 3zM20 4l-4 3 4 3z" /></S>]],
    [["Volume", <S w={18} h={13} sw={1.300}><path {...F} d="M0 4h3l5-4v13L3 9H0z" /><path d="M10 4q2 2.500 0 5M12.500 2.500q3 4 0 8M15 1q4 5.500 0 11" stroke="#bbb" /></S>], ["Gain", <span className="font-['Open_Sans'] text-[9px] leading-none font-bold">+0dB</span>], ["Sliders", <Routing w={20} />]],
    [["Freeze", <Snowflake size={14} strokeWidth={2.500} />], ["Glue", <S w={16} h={12} sw={1.500}><path d="M0 .7h16M0 11.300h16" /><circle cx="5.500" cy="6" r="2.800" /><circle cx="10.500" cy="6" r="2.800" /></S>], ["Render", <S w={10} h={12} sw={1.500}><path d="M0 .7h10M0 11.300h10" /><circle cx="5" cy="6" r="3" /></S>]],
    [["Split items", <S w={22} h={16} sw={1.200}><path strokeDasharray="2 1" d="M1 16V1h5M9 16V1h4M17 16V1h4" /><path stroke="#888" d="M3 8v6M5 10v3M11 8v6M13 10v3M19 9v4M21 10v2" /></S>],
      ["Join items", <S w={22} h={16} sw={1.200}><path d="M5 1H1v14h5M7 1h3v14H7M15 1h-3v14h3M17 1h4v14h-5" /><path stroke="#888" d="M3 5v6M5 6v4M7 5v5M15 5v5M17 4v6M19 6v3" /></S>],
      ["Reverse", <S w={16} h={16} sw={1.500}><path d="M8 3a6 6 0 1 1-5 2.500" /><path {...F} d="M9 0v6L5 3z" /></S>]],
  ];
  return (
    <div className="absolute top-0 left-[563px] flex h-[40px] w-[782px] items-center gap-[17px] border-t border-[#303030] bg-[#5b5b5b] pl-[22px]">
      {groups.map((g, i) => (
        <div key={i} className="flex gap-[2px]">{g.map(([l, ic]) => <IconBtn key={l} label={l} className={boxBtn}>{ic}</IconBtn>)}</div>
      ))}
      <div className="flex items-center gap-[2px]">
        <IconBtn label="Text cursor" className={boxBtnOn}><S w={8} h={12} sw={1.500}><path d="M0 .7h8M0 11.300h8M4 0v12" /></S></IconBtn>
        <IconBtn label="Draw" className={boxBtn}><S w={14} h={14}><path {...F} d="M0 14l1.500-4.500L10 1l3 3-8.500 8.500z" /></S></IconBtn>
        <button aria-label="Info" className="ml-[7px] flex h-[18px] w-[18px] items-center justify-center rounded-full bg-white font-['Liberation_Serif'] text-[16px] leading-none font-bold text-black italic">i</button>
      </div>
      <span className="absolute top-[1px] right-[2px] flex items-center gap-[3px] text-white">
        <S w={6} h={8} sw={1}><path {...F} d="M1 0h4v4h1v1H0V4h1z" /><path d="M3 5v3" /></S>
        <button aria-label="Close" className="flex h-[9px] w-[9px] items-center justify-center border border-white"><S w={5} h={5} sw={1}><path d="M0 0l5 5M5 0L0 5" /></S></button>
      </span>
      <span className="absolute right-[1px] bottom-[1px] text-white"><S w={8} h={8}><path {...F} d="M6 0h2v2H6zM3 3h2v2H3zM6 3h2v2H6zM0 6h2v2H0zM3 6h2v2H3zM6 6h2v2H6z" /></S></span>
    </div>
  );
}
function Arrange() {
  const bars = Array.from({ length: 23 }, (_, i) => 23 + i * 2);
  const halves = Array.from({ length: 92 }, (_, i) => 22.5 + i * 0.5);
  return (
    <section className="relative ml-[8px] flex min-w-0 flex-1 flex-col overflow-hidden">
      <div className="mt-[2px] h-[14px] bg-[#2b2b2b]" />
      <div className="relative h-[14px] bg-[#464646]">
        {[[4, 23, "PRE CHORUS"], [5, 27, "CHORUS 1 A"], [6, 35, "CHORUS 1 B"]].map(([n, b, t]) => (
          <div key={n} className="absolute top-0 flex h-[14px] items-center gap-[3px] text-[10px] whitespace-nowrap text-[#c4c4c4]" style={{ left: barX(b) }}>
            <span className="flex h-[13px] w-[13px] items-center justify-center rounded-full border border-white bg-[#777] leading-none text-white">{n}</span>{t}
          </div>
        ))}
      </div>
      <div className="relative h-[38px] overflow-hidden bg-[#303030] text-[13px] text-white">
        <div className="absolute inset-x-0 bottom-0 h-[4px] bg-[#ee970f]" />
        <div className="absolute inset-x-0 bottom-[4px] h-[1px] bg-white" />
        {halves.map((b) => <i key={b} className="absolute bottom-0 h-[7px] w-[1px] bg-white" style={{ left: barX(b) }} />)}
        {bars.map((b) => (
          <span key={b} className="absolute bottom-0 flex" style={{ left: barX(b) }}>
            <i className={"w-[1px] " + (MAJOR.includes(b) ? "h-[38px] bg-[#8a8a8a]" : "mt-[11px] h-[27px] bg-white")} />
            <span className="mt-[11px] ml-[3px] leading-[15px]">{b}</span>
          </span>
        ))}
      </div>
      <div className="flex h-[784px]">
        <div className="relative min-w-0 flex-1 overflow-hidden bg-[#353535]">
          {MAJOR.map((b) => <i key={b} className="absolute inset-y-0 w-[1px] bg-[#8a8a8a]" style={{ left: barX(b) }} />)}
          <div className="relative flex flex-col">
            {LANES.map((l) => (
              <div key={l.id} className={l.id === 36 ? "flex h-[30px] flex-col justify-end overflow-hidden" : ""}>
                <div className={"relative shrink-0 border-b border-[#262626]" + (l.sel ? " bg-[linear-gradient(to_bottom,transparent_48px,#6e6e6e_48px)]" : "")} style={{ height: l.h }}>
                  {l.env && <EnvelopeLane />}
                  {l.clips.map((c, i) => <Clip key={i} c={c} h={l.h - (l.sel ? 5 : 6)} />)}
                </div>
              </div>
            ))}
          </div>
        </div>
        <div className="flex w-[17px] flex-col items-center bg-[#2d2d2d]">
          <div className="mt-[4px]"><Tri dir="up" /></div>
          <div className="flex-[398_1_0px]" />
          <div className="flex h-[212px] w-[11px] items-center justify-center rounded-[4px] bg-[#5b5b5b]"><i className="h-[2px] w-[5px] bg-[#333]" /></div>
          <div className="flex-[108_1_0px]" />
          <Tri dir="down" />
          <button aria-label="Zoom in vertically" className="mt-[5px] leading-none"><PlusC /></button>
          <button aria-label="Zoom out vertically" className="mt-[7px] mb-[2px] leading-none"><PlusC minus /></button>
        </div>
      </div>
      <div className="flex h-[18px] items-center bg-[#2d2d2d] pl-[4px]">
        <Tri /><div className="flex-[157_1_0px]" />
        <div className="flex h-[11px] w-[312px] items-center justify-between rounded-[4px] bg-[#5b5b5b] px-[2px]"><i className="h-[5px] w-[5px] rounded-full bg-[#333]" /><i className="h-[5px] w-[2px] bg-[#333]" /><i className="h-[5px] w-[5px] rounded-full bg-[#333]" /></div>
        <div className="flex-[830_1_0px]" />
        <Tri dir="right" />
        <button aria-label="Zoom in" className="ml-[7px]"><PlusC /></button>
        <button aria-label="Zoom out" className="mr-[2px] ml-[7px]"><PlusC minus /></button>
        <i className="h-full w-[17px] bg-[#515151]" />
      </div>
      <FloatBar />
    </section>
  );
}

/* ---------- right column ---------- */
const METER = [["6", "6"], ["0", "12"], ["6", "18"], ["12", "24"], ["18", "30"], ["", "36"], ["30", "42"], ["", "48"], ["42", "54"]];
function Master() {
  const mon = boxBtn + " gap-[3px] text-[12px] font-['Open_Sans']";
  const tone = (i) => (i === 0 || i === 1 ? "text-[#d08a20]" : "text-[#bbb]");
  return (
    <aside className="ml-[8px] w-[118px] text-white">
      <div className="mt-[10px] grid w-[108px] grid-cols-3 gap-x-[2px] gap-y-[12px] pl-[5px] [&>button]:w-[33px]">
        {[1, 2, 3, 4].map((n) => <button key={n} className={"flex items-center justify-center " + mon}><Monitor />{n}</button>)}
        <IconBtn label="All screens" className={boxBtn}><S w={18} h={15} sw={1.300}><path stroke="#bbb" d="M4 8H1V1h11v2" /><path d="M5 4h12v7H5zM11 11v2M7 14h8" /></S></IconBtn>
        <IconBtn label="Settings" className={mon}><S w={13} h={13} sw={2.500}><circle cx="6.500" cy="6.500" r="3" /><path d="M6.500 0v13M0 6.500h13M2 2l9 9M11 2l-9 9" strokeWidth="1.500" /><circle cx="6.500" cy="6.500" r="1.500" fill="#4f4f4f" stroke="none" /></S><svg width="5" height="5" fill="#ccc"><path d="M0 0h5L2.500 5z" /></svg></IconBtn>
      </div>
      <div className="mt-[16px] h-[546px] rounded-[10px] border border-[#333] px-[3px] pt-[14px]">
        <button className="h-[20px] w-full rounded-[2px] border border-[#274a74] bg-[#2d6db5] text-[11px] leading-[17px]">bx_masterdesk</button>
        <div className="flex h-[46px] items-end justify-end bg-[#3a3a3a]"><S w={10} h={10} sw={1} stroke="#666"><path d="M0 10L10 0M3 10l7-7M6 10l4-4" /></S></div>
        <div className="mt-[4px] flex h-[20px] items-center bg-[#383838]">
          <button className="h-full w-[81px] border-r border-[#888] bg-[#2d2d2d] pl-[1px] text-left text-[11px] whitespace-nowrap">Out 1 / Out 2</button>
          <span className="ml-auto"><svg width="18" height="18"><circle cx="9" cy="9" r="9" fill="#2b2b2b" /><circle cx="9" cy="9" r="7.500" fill="none" stroke="#999" strokeDasharray="30 17" strokeDashoffset="-12" /><circle cx="9" cy="9" r="5.500" fill="#aaa" /><path stroke="#222" d="M9 4v5" /></svg></span>
        </div>
        {[0, 1].map((i) => (
          <div key={i} className="mt-[2px] flex h-[19px] bg-[#383838]"><S w={8} h={8} sw={1} stroke="#555"><path d="M0 2l2-2M0 5l5-5M0 8l8-8" /></S><i className="mt-[2px] ml-auto h-[15px] w-[15px] rounded-full bg-[#313131]" /></div>
        ))}
        <div className="mt-[3px] flex h-[380px] flex-col border border-[#272727] bg-[#2f2f2f] pt-[6px]">
          <div className="flex gap-[4px] px-[1px] text-[9px] font-bold text-[#0aea3a]">
            <div className="flex h-[20px] flex-1 items-center justify-center border border-[#222] bg-[#343434] pt-[2px]">-101</div>
            <div className="flex h-[20px] flex-1 items-center justify-center border border-[#222] bg-[#343434] pt-[2px]">-101</div>
          </div>
          <div className="mt-[4px] flex h-[10px] items-center justify-between px-[1px] font-['Roboto'] text-[8px] font-bold text-[#c8141c]">
            <span>12</span><svg width="74" height="10"><path fill="#e79a14" d="M0 1l5 4-5 4zM74 1l-5 4 5 4z" /><path stroke="#777" d="M5 5h64" /><circle cx="37" cy="5" r="3" fill="#2f2f2f" stroke="#999" strokeWidth="1.500" /></svg><span>12</span>
          </div>
          <div className="relative flex h-[330px] flex-col font-['Roboto'] text-[8px] font-bold text-[#bbb]">
            <div className="absolute inset-y-0 left-[30px] w-[18px] border-x border-[#474747] bg-[#333]"><div className="h-[28px] bg-[#4a3e34]" /></div>
            <div className="absolute inset-y-0 right-[30px] w-[18px] border-x border-[#474747] bg-[#333]"><div className="h-[28px] bg-[#4a3e34]" /></div>
            <div className="relative flex h-[313px] flex-col pt-[11px]">
              {METER.map(([l, c], i) => (
                <div key={i} className="flex flex-1 items-center">
                  <span className={"w-[10px] pl-[1px] " + tone(i)}>{l}</span><i className="h-[1px] w-[11px] bg-[#232323]" />
                  <i className="ml-[9px] h-[1px] w-[18px] bg-[#4b4b4b]" /><span className="flex-1 text-center">{c}</span><i className="mr-[9px] h-[1px] w-[18px] bg-[#4b4b4b]" />
                  <i className="h-[1px] w-[11px] bg-[#232323]" /><span className={"w-[10px] pr-[1px] text-right " + tone(i)}>{l}</span>
                </div>
              ))}
            </div>
            <div className="relative h-[16px] text-center leading-[16px]">60</div>
          </div>
          <div className="mx-[1px] mt-[1px] h-[5px] flex-1 bg-[#363636]" />
        </div>
      </div>
      <div className="mt-[5px] h-[276px] rounded-[10px] border border-[#333] px-[5px] pt-[18px]">
        <div className="flex border border-[#303030] bg-[#303030]">
          <div className="flex w-[68px] items-center justify-between border border-[#2d6db5] bg-[#2c5078] pr-[2px] text-[11px]">
            <IconBtn label="Bypass master FX" className="h-[17px] w-[20px] bg-[#2d6db5]"><Power s={10} /></IconBtn><button>FX</button><button aria-label="Add master FX"><PlusC s={11} /></button>
          </div>
          <IconBtn label="Master envelopes" className="flex-1"><Env /></IconBtn>
        </div>
        <div className="flex h-[21px] border border-[#303030] bg-[#4c4c4c] text-[12px]">
          <button className="w-[34px] border-r border-[#303030]">M</button><button className="w-[35px] border-r-2 border-[#303030]">S</button>
          <IconBtn label="Menu" className="flex-1"><S w={14} h={10} sw={2}><path d="M4 1h10M4 5h10M4 9h10M0 1h2M0 5h2M0 9h2" /></S></IconBtn>
        </div>
        <div className="mt-[2px] flex h-[65px] border border-[#303030] bg-[#3a3a3a]">
          <div className="flex w-[59px] flex-col items-center pt-[10px] text-[9px] leading-[10px] font-bold"><div className="h-[38px]"><Knob /></div>center</div>
          <div className="mt-[8px] flex h-[46px] flex-1 items-center justify-center rounded-l-[8px] border border-r-0 border-[#666]"><svg width="24" height="24" fill="none"><circle cx="12" cy="12" r="8" fill="#555" /><path stroke="#888" strokeWidth="1.500" d="M6 21A11 11 0 1 1 18 21" /><path stroke="#222" d="M12 12l5 7" /></svg></div>
        </div>
        <div className="mt-[2px] flex h-[76px] items-end justify-between border border-[#303030] px-[6px] pb-[4px] text-[16px] leading-[16px] text-black">
          <span>−</span>
          <svg width="66" height="66" role="img" aria-label="Master volume knob">
            <defs><linearGradient id="mk" x2="0" y2="1"><stop stopColor="#8d8d8d" /><stop offset="1" stopColor="#606060" /></linearGradient></defs>
            <circle cx="33" cy="32" r="31" fill="#2b2b2b" /><path fill="none" stroke="#606060" strokeWidth="7" d="M33 5a27 27 0 0 0-8 52.500" />
            <circle cx="33" cy="32" r="22" fill="#1d1d1d" /><circle cx="33" cy="32" r="20" fill="#777" /><circle cx="33" cy="32" r="17" fill="url(#mk)" stroke="#999" /><path stroke="#111" strokeWidth="2" d="M33 18v8" />
            <path fill="#888" d="M46 9h1v1h-1zM55 20h1v1h-1zM59 32h1v1h-1zM55 44h1v1h-1zM46 54h1v1h-1z" />
          </svg>
          <span>+</span>
        </div>
        {[["Volume", <span className="text-[10px] font-bold text-[#aaa]">0.00</span>], ["Route", <svg width="17" height="12"><path fill="#888" d="M0 0h17v5H0z" /><path fill="#d38d2f" d="M0 7h17v5H0z" /></svg>],
          ["Mono", <svg width="18" height="14" fill="none" stroke="#ccc"><circle cx="9" cy="7" r="3.500" fill="#ddd" /><path d="M4 1Q-2 7 4 13M14 1q6 6 0 12" /></svg>]].map(([l, r]) => (
          <div key={l} className="flex h-[22px] items-center justify-between border border-t-0 border-[#2b2b2b] bg-[#383838] px-[4px] text-[11px]"><span>{l}</span>{r}</div>
        ))}
      </div>
    </aside>
  );
}

/* ---------- bottom toolbar ---------- */
function BottomBar() {
  const items = [["Trim and fader", <Bowties />], ["Routing tree", <Tree />], ["Clock", <Clock />], ["Target", <Target />], ["Performance", <Gauge />], ["Browser", <BlueFolder />], ["Parameters", <BlueSliders />], ["Pan knob", <KnobP />],
    ["FX power", <span className="flex items-center gap-[1px] text-[13px] text-[#ccc]">FX<Power s={12} /></span>], ["Patch", <Cable />]];
  return (
    <div className="mt-[11px] flex h-[34px] text-white">
      <div className="flex-[630_1_0px]" />
      <IconBtn label="Mixer layout" className="h-full w-[35px] rounded-[3px] bg-[#2f2f2f]"><MixPages /></IconBtn>
      <div className="ml-[15px] flex rounded-[3px] bg-[#2f2f2f]">{items.map(([l, i]) => <IconBtn key={l} label={l} className={toolCell}>{i}</IconBtn>)}</div>
      <IconBtn label="Package" className="ml-[15px] h-full w-[35px] rounded-[3px] bg-[#2f2f2f]"><Cube /></IconBtn>
      <div className="flex-[626_1_0px]" />
    </div>
  );
}

export default function App() {
  return (
    <div className="flex min-h-screen flex-col overflow-hidden border-t-2 border-[#f2f2f2] bg-[#5b5b5b] font-['Liberation_Sans',sans-serif] leading-tight">
      <Transport />
      <MainToolbar />
      <main className="flex flex-1">
        <ChannelStrip />
        <div className="ml-[7px] flex min-w-0 flex-1 flex-col">
          <div className="flex h-[870px]"><TrackPanel /><Arrange /></div>
          <BottomBar />
        </div>
        <Master />
      </main>
      <div className="h-[2px] bg-[#2b2b2b]" />
    </div>
  );
}
